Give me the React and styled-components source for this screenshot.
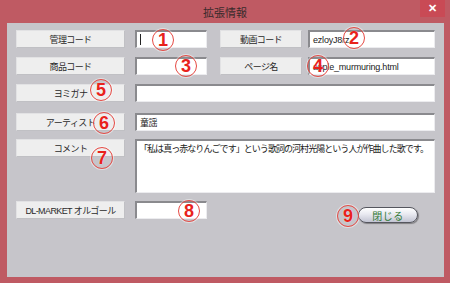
import React from "react";
import styled, { createGlobalStyle } from "styled-components";

const Global = createGlobalStyle`
  html, body { margin: 0; padding: 0; background: #bf5a63; }
  body { width: 450px; height: 283px; overflow: hidden; font-family: "Noto Sans CJK JP", "Liberation Sans", sans-serif; }
`;

const Window = styled.div`
  width: 450px;
  height: 283px;
  background: #bf5a63;
  display: flex;
  flex-direction: column;
  box-sizing: border-box;
`;

const TitleBar = styled.div`
  position: relative;
  height: 23px;
  display: flex;
  align-items: center;
  justify-content: center;
  font-size: 11px;
  color: #3a2a2c;
`;

const CloseBox = styled.div`
  position: absolute;
  right: 5px;
  top: 0;
  width: 25px;
  height: 17px;
  background: #c94a55;
  color: #fff;
  font-family: "Liberation Sans", sans-serif;
  font-weight: bold;
  font-size: 11px;
  display: flex;
  align-items: center;
  justify-content: center;
`;

const Panel = styled.div`
  margin: 0 6px 6px 7px;
  height: 254px;
  background: #c6c5ca;
  box-sizing: border-box;
  padding: 7px 0 0 9px;
  display: flex;
  flex-direction: column;
`;

const Row = styled.div`
  position: relative;
  display: flex;
  align-items: flex-start;
  margin-top: ${(p) => p.$top || 0}px;
`;

const Label = styled.div`
  box-sizing: border-box;
  width: ${(p) => p.$w || 109}px;
  height: 18px;
  margin-left: ${(p) => p.$ml || 0}px;
  background: #eeeeee;
  border: 1px solid #e2e2e4;
  border-right-color: #c0c0c4;
  border-bottom-color: #c0c0c4;
  display: flex;
  align-items: center;
  justify-content: center;
  font-size: 9px;
  letter-spacing: -0.6px;
  color: #2a2a2a;
  white-space: nowrap;
  font-family: ${(p) => (p.$latin ? '"Liberation Sans", "Noto Sans CJK JP", sans-serif' : '"Noto Sans CJK JP", sans-serif')};
`;

const Field = styled.div`
  position: relative;
  box-sizing: border-box;
  width: ${(p) => p.$w}px;
  height: ${(p) => p.$h || 18}px;
  margin-left: ${(p) => p.$ml || 0}px;
  background: #ffffff;
  border-top: 2px solid #8a8a8e;
  border-left: 2px solid #8a8a8e;
  border-right: 1px solid #ececef;
  border-bottom: 1px solid #ececef;
  padding: ${(p) => (p.$multi ? "1px 2px" : "0 3px")};
  display: flex;
  align-items: ${(p) => (p.$multi ? "flex-start" : "center")};
  font-size: 9px;
  color: #222;
  white-space: ${(p) => (p.$multi ? "normal" : "nowrap")};
  overflow: hidden;
  font-family: ${(p) => (p.$latin ? '"Liberation Sans", sans-serif' : '"Noto Sans CJK JP", sans-serif')};
  letter-spacing: ${(p) => (p.$latin ? "-0.2px" : p.$multi ? "-0.95px" : "-0.6px")};
`;

const Caret = styled.span`
  display: block;
  width: 1px;
  height: 11px;
  background: #222;
`;

const Badge = styled.div`
  position: absolute;
  left: ${(p) => p.$x}px;
  top: ${(p) => p.$y}px;
  width: 20px;
  height: 20px;
  border-radius: 50%;
  border: 1px solid #e64a44;
  box-shadow: 0 0 0 1px rgba(255, 255, 255, 0.45);
  display: flex;
  align-items: center;
  justify-content: center;
  font-family: "Liberation Sans", sans-serif;
  font-weight: bold;
  font-size: 18px;
  color: #e8221c;
  line-height: 1;
  text-shadow: 0 0 1px #fff;
  z-index: 2;
`;

const CloseButton = styled.button`
  box-sizing: border-box;
  margin-left: ${(p) => p.$ml}px;
  margin-top: 6px;
  width: 60px;
  height: 16px;
  border: 1px solid #55565e;
  border-radius: 8px;
  background: linear-gradient(#ffffff 0%, #e8e9f0 45%, #c2c4d2 100%);
  box-shadow: 1px 1px 1px rgba(0, 0, 0, 0.35);
  color: #2f7a34;
  font-family: "Noto Sans CJK JP", sans-serif;
  font-size: 10px;
  padding: 0;
  display: flex;
  align-items: center;
  justify-content: center;
  letter-spacing: 0.5px;
`;

export default function App() {
  return (
    <Window>
      <Global />
      <TitleBar>
        拡張情報
        <CloseBox>✕</CloseBox>
      </TitleBar>
      <Panel>
        <Row>
          <Label>管理コード</Label>
          <Field $ml={10} $w={72}>
            <Caret />
          </Field>
          <Label $ml={13} $w={82}>動画コード</Label>
          <Field $ml={6} $w={127} $latin>ezloyJ8rz</Field>
          <Badge $x={136} $y={-1}>1</Badge>
          <Badge $x={327} $y={-3}>2</Badge>
        </Row>
        <Row $top={9}>
          <Label>商品コード</Label>
          <Field $ml={10} $w={72} />
          <Label $ml={13} $w={82}>ページ名</Label>
          <Field $ml={6} $w={127} $latin>apple_murmuring.html</Field>
          <Badge $x={159} $y={-2}>3</Badge>
          <Badge $x={291} $y={-2}>4</Badge>
        </Row>
        <Row $top={9}>
          <Label>ヨミガナ</Label>
          <Field $ml={10} $w={300} />
          <Badge $x={74} $y={-5}>5</Badge>
        </Row>
        <Row $top={11}>
          <Label>アーティスト</Label>
          <Field $ml={10} $w={300}>童謡</Field>
          <Badge $x={77} $y={-1}>6</Badge>
        </Row>
        <Row $top={8}>
          <Label>コメント</Label>
          <Field $ml={10} $w={300} $h={54} $multi>
            「私は真っ赤なりんごです」という歌詞の河村光陽という人が作曲した歌です。
          </Field>
          <Badge $x={75} $y={8}>7</Badge>
        </Row>
        <Row $top={8}>
          <Label $latin>DL-MARKET オルゴール</Label>
          <Field $ml={10} $w={72} />
          <CloseButton $ml={151}>閉じる</CloseButton>
          <Badge $x={162} $y={-1}>8</Badge>
          <Badge $x={321} $y={4}>9</Badge>
        </Row>
      </Panel>
    </Window>
  );
}
